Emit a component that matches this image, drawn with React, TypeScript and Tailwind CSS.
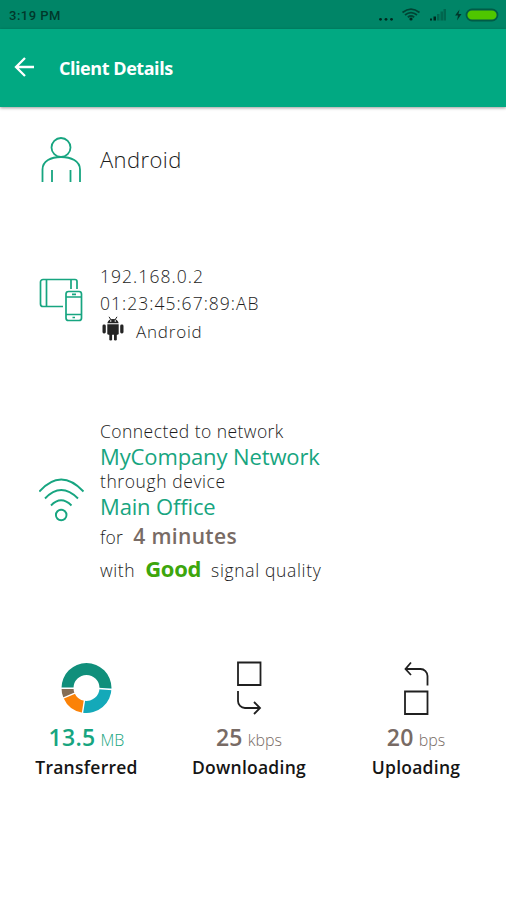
import type { ReactNode } from "react";

function StatusBar() {
  return (
    <div className="flex h-[29px] items-center justify-between bg-[#008567] pl-[9px] pr-[5px]">
      <span className="mt-[2px] font-['Roboto',sans-serif] text-[13px] font-medium tracking-[0.5px] text-[#00382b]">3:19 PM</span>
      <svg width="122" height="20" viewBox="0 0 122 20">
        <g fill="#00291f">
          <circle cx="1.500" cy="14.300" r="1.400" />
          <circle cx="7" cy="14.300" r="1.400" />
          <circle cx="12.500" cy="14.300" r="1.400" />
          <circle cx="32" cy="14" r="1.600" />
        </g>
        <g fill="none" stroke="#004434" strokeWidth="1.800">
          <path d="M23.500 7.500Q32 .8 40.500 7.500M26 10Q32 5.200 38 10M28.800 12.300Q32 9.800 35.200 12.300" />
        </g>
        <path d="M51 15.500v-2h2v2zM54.500 15.500v-4h2.500v4z" fill="#00291f" />
        <path d="M58 15.500V9h2.500v6.500zM61.500 15.500V6.500H64v9zM64.500 15.500V4h2.500v11.500z" fill="#00664e" />
        <path d="M80.500 4.500L76 10.500h3l-1 5 4.500-6.500h-3z" fill="#00382b" />
        <rect x="87.500" y="4.500" width="31" height="11" rx="5.500" fill="#4fc600" stroke="#005c47" strokeWidth="1.800" />
      </svg>
    </div>
  );
}

function AppBar() {
  return (
    <header className="flex h-[78px] items-center bg-[#01a982] pl-[14px] shadow-[0_1px_3px_rgba(0,0,0,0.4)]">
      <svg width="22" height="22" viewBox="0 0 22 22" fill="none" stroke="#fff" strokeWidth="2.300" className="-mt-[2px]">
        <path d="M20 11H2M11 2L2 11l9 9" />
      </svg>
      <h1 className="ml-[23px] text-[18px] font-bold tracking-[-0.45px] text-white">Client Details</h1>
    </header>
  );
}

function PersonIcon() {
  return (
    <svg width="44" height="48" viewBox="0 0 44 48" fill="none" stroke="#17a580" strokeWidth="1.800">
      <circle cx="21" cy="11.500" r="9.500" />
      <path d="M2.500 46V33.500C2.500 25 11 21 21 21s19 4 19 12.500V46M12 34v12M30.500 34v12" />
    </svg>
  );
}

function DevicesIcon() {
  return (
    <svg width="46" height="46" viewBox="0 0 46 46" fill="none" stroke="#17a580" strokeWidth="1.700">
      <path d="M38 12V4.500a2 2 0 0 0-2-2H4a2.500 2.500 0 0 0-2.500 2.500v22A2.500 2.500 0 0 0 4 29.500h20M7.500 2.500v27M32 2.500V12" />
      <rect x="27" y="14.500" width="15.500" height="29" rx="2.500" />
      <path d="M27 20h15.500M27 37.500h15.500M33 17.300h4M33.500 40.500h2.500" />
    </svg>
  );
}

function WifiIcon() {
  return (
    <svg width="46" height="46" viewBox="0 0 46 46" fill="none" stroke="#17a580" strokeWidth="1.900">
      <path d="M.3 14.500Q22-9.500 44.500 14.500M6 21.500Q22 4.500 39 21.500M12 28.500Q22 18 32.500 28.500" />
      <circle cx="22.200" cy="38" r="5.300" />
    </svg>
  );
}

function RobotIcon() {
  return (
    <svg width="22" height="25" viewBox="0 0 22 25" fill="#242424" className="-mt-[6px]">
      <path d="M5.300 7.200a5.800 5.300 0 0 1 11.400 0z" />
      <path d="M7 .8l2 3M15 .8l-2 3" stroke="#242424" strokeWidth="1" />
      <path d="M5.300 8.200h11.400v9a1.500 1.500 0 0 1-1.500 1.500H6.800a1.500 1.500 0 0 1-1.500-1.500z" />
      <rect x=".5" y="8.500" width="3.300" height="9" rx="1.400" />
      <rect x="18.200" y="8.500" width="3.300" height="9" rx="1.400" />
      <rect x="7.300" y="17" width="2.800" height="7.500" rx="1.200" />
      <rect x="12" y="17" width="2.800" height="7.500" rx="1.200" />
      <g fill="#fff"><circle cx="8.700" cy="5" r=".8" /><circle cx="13.300" cy="5" r=".8" /></g>
    </svg>
  );
}

function UsageDonut() {
  return (
    <svg width="52" height="52" viewBox="-25.500 -26 52 52">
      <path d="M-25 0A25 25 0 0 1 25 0L13 0A13 13 0 0 0-13 0Z" fill="#108f7b" />
      <path d="M25 0A25 25 0 0 1-4 24.700L-2 12.800A13 13 0 0 0 13 0Z" fill="#14a9b9" />
      <path d="M-4 24.700A25 25 0 0 1-23 10L-12 5A13 13 0 0 0-2 12.800Z" fill="#fb8208" />
      <path d="M-23 10A25 25 0 0 1-25 0L-13 0A13 13 0 0 0-12 5Z" fill="#856d55" />
      <path d="M-26 .2H-12M12 .5L26 1.500M-4.200 26L-2 12M-24 10.400L-11 4.800" stroke="#fff" strokeWidth="1.400" />
    </svg>
  );
}

function DownloadIcon() {
  return (
    <svg width="26" height="54" viewBox="0 0 26 54" fill="none" stroke="#202020" strokeWidth="1.800">
      <path d="M2 1.500h22.500v22.500H2zM2 30v10a7 7 0 0 0 7 7H23.500M18 41l6 6-6 6" />
    </svg>
  );
}

function UploadIcon() {
  return (
    <svg width="26" height="54" viewBox="0 0 26 54" fill="none" stroke="#202020" strokeWidth="1.800">
      <path d="M2 30.500h22.500V53H2zM24.500 24.500V15a7 7 0 0 0-7-7H2.500M8 1.500L2.500 8l5.500 6" />
    </svg>
  );
}

type StatProps = { icon: ReactNode; value: string; unit: string; label: string; tone: string };

function Stat({ icon, value, unit, label, tone }: StatProps) {
  return (
    <div className="flex flex-col items-center">
      <div className="flex h-[56px] items-center">{icon}</div>
      <div className={`mt-[5px] flex h-[32px] items-baseline gap-[5px] leading-[32px] ${tone}`}>
        <span className="text-[23px] font-semibold tracking-[0.3px]">{value}</span>
        <span className="text-[16px] font-light">{unit}</span>
      </div>
      <div className="h-[28px] whitespace-nowrap text-[17.5px] font-semibold leading-[28px] tracking-[0.25px] text-[#151515]">{label}</div>
    </div>
  );
}

export default function App() {
  return (
    <div className="flex h-[900px] w-[506px] flex-col overflow-hidden bg-white font-['Open_Sans','Noto_Sans',sans-serif] text-[#1c1c1c]">
      <StatusBar />
      <AppBar />
      <main>
        <section className="flex h-[105px] items-center pl-[40px]">
          <PersonIcon />
          <p className="ml-[16px] text-[22px] font-light tracking-[0.4px]">Android</p>
        </section>
        <section className="mt-[48px] flex h-[86px] pl-[39px]">
          <div className="mt-[17px] w-[61px]"><DevicesIcon /></div>
          <div className="text-[17.5px] font-light leading-[27px]">
            <p className="mt-[3px] tracking-[1.05px]">192.168.0.2</p>
            <p className="tracking-[1.02px]">01:23:45:67:89:AB</p>
            <div className="flex h-[28px] items-center gap-[12px] pl-[2px]">
              <RobotIcon />
              <span className="text-[17px] tracking-[0.8px]">Android</span>
            </div>
          </div>
        </section>
        <section className="mt-[73px] flex h-[170px] pl-[39px]">
          <div className="mt-[58px] w-[61px]"><WifiIcon /></div>
          <div className="whitespace-nowrap text-[17.5px] font-light leading-[25px]">
            <p className="tracking-[0.45px]">Connected to network</p>
            <p className="text-[22px] font-normal leading-[24px] tracking-[-0.12px] text-[#17a580]">MyCompany Network</p>
            <p className="leading-[26px] tracking-[0.58px]">through device</p>
            <p className="text-[22px] font-normal tracking-[-0.15px] text-[#17a580]">Main Office</p>
            <p className="flex h-[33px] items-baseline gap-[10px] leading-[34px]"><span className="tracking-[0.3px]">for</span><b className="text-[21px] font-semibold tracking-[0.35px] text-[#786b65]">4 minutes</b></p>
            <p className="flex h-[32px] items-baseline gap-[10px] leading-[32px]"><span className="tracking-[0.6px]">with</span><b className="text-[22px] font-bold tracking-[-0.3px] text-[#3da60d]">Good</b><span className="tracking-[0.65px]">signal quality</span></p>
          </div>
        </section>
        <section className="mt-[71px] grid grid-cols-[173px_152px_182px]">
          <Stat icon={<UsageDonut />} value="13.5" unit="MB" label="Transferred" tone="text-[#17a580]" />
          <Stat icon={<DownloadIcon />} value="25" unit="kbps" label="Downloading" tone="text-[#786b65]" />
          <Stat icon={<UploadIcon />} value="20" unit="bps" label="Uploading" tone="text-[#786b65]" />
        </section>
      </main>
    </div>
  );
}
